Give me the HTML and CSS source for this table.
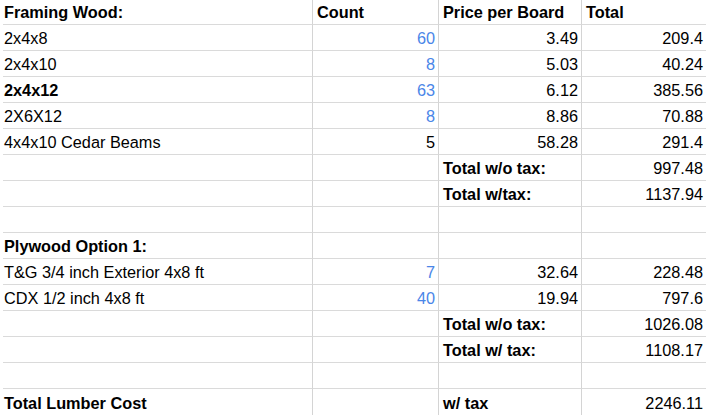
FILE: index.html
```html
<!DOCTYPE html>
<html>
<head>
<meta charset="utf-8">
<link rel="stylesheet" href="styles.css">
</head>
<body>
<div class="sheet">
  <div class="c c1 b">Framing Wood:</div><div class="c c2 b">Count</div><div class="c c3 b">Price per Board</div><div class="c c4 b">Total</div>
  <div class="c c1">2x4x8</div><div class="c c2 n blue">60</div><div class="c c3 n">3.49</div><div class="c c4 n">209.4</div>
  <div class="c c1">2x4x10</div><div class="c c2 n blue">8</div><div class="c c3 n">5.03</div><div class="c c4 n">40.24</div>
  <div class="c c1 b">2x4x12</div><div class="c c2 n blue">63</div><div class="c c3 n">6.12</div><div class="c c4 n">385.56</div>
  <div class="c c1">2X6X12</div><div class="c c2 n blue">8</div><div class="c c3 n">8.86</div><div class="c c4 n">70.88</div>
  <div class="c c1">4x4x10 Cedar Beams</div><div class="c c2 n">5</div><div class="c c3 n">58.28</div><div class="c c4 n">291.4</div>
  <div class="c c1"></div><div class="c c2"></div><div class="c c3 b">Total w/o tax:</div><div class="c c4 n">997.48</div>
  <div class="c c1"></div><div class="c c2"></div><div class="c c3 b">Total w/tax:</div><div class="c c4 n">1137.94</div>
  <div class="c c1"></div><div class="c c2"></div><div class="c c3"></div><div class="c c4"></div>
  <div class="c c1 b">Plywood Option 1:</div><div class="c c2"></div><div class="c c3"></div><div class="c c4"></div>
  <div class="c c1">T&amp;G 3/4 inch Exterior 4x8 ft</div><div class="c c2 n blue">7</div><div class="c c3 n">32.64</div><div class="c c4 n">228.48</div>
  <div class="c c1">CDX 1/2 inch 4x8 ft</div><div class="c c2 n blue">40</div><div class="c c3 n">19.94</div><div class="c c4 n">797.6</div>
  <div class="c c1"></div><div class="c c2"></div><div class="c c3 b">Total w/o tax:</div><div class="c c4 n">1026.08</div>
  <div class="c c1"></div><div class="c c2"></div><div class="c c3 b">Total w/ tax:</div><div class="c c4 n">1108.17</div>
  <div class="c c1"></div><div class="c c2"></div><div class="c c3"></div><div class="c c4"></div>
  <div class="c c1 b last">Total Lumber Cost</div><div class="c c2 last"></div><div class="c c3 b last">w/ tax</div><div class="c c4 n last">2246.11</div>
</div>
</body>
</html>
```
FILE: styles.css
```css
html, body {
  margin: 0;
  padding: 0;
  background: #ffffff;
}
body {
  font-family: "Liberation Sans", Arial, sans-serif;
  font-size: 16.3px;
  color: #000000;
  overflow: hidden;
}
.sheet {
  display: grid;
  grid-template-columns: 310px 126px 143px 124px;
  grid-auto-rows: 26px;
  margin: -1px 0 0 3px;
}
.c {
  box-sizing: border-box;
  border-bottom: 1px solid #dadada;
  border-right: 1px solid #d4d4d4;
  display: flex;
  align-items: flex-end;
  padding: 0 3px 3px 4px;
  line-height: 18px;
  white-space: nowrap;
  overflow: hidden;
}
.c1 { padding-left: 1px; }
.c4 { border-right: none; }
.last { border-bottom: none; }
.b { font-weight: bold; }
.n { justify-content: flex-end; }
.blue { color: #4a86e8; }
```
